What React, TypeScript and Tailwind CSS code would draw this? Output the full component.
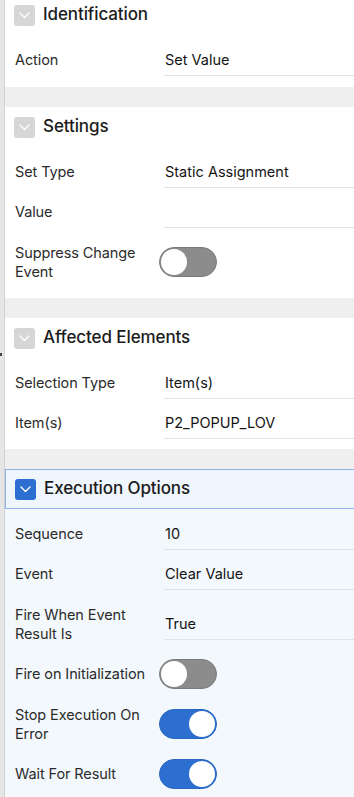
import React from "react";

type Row =
  | { kind: "text"; label: string; value: string; tall?: boolean }
  | { kind: "toggle"; label: string; on: boolean; tall?: boolean };

type Section = { title: string; active?: boolean; rows: Row[]; first?: boolean };

const sections: Section[] = [
  {
    title: "Identification",
    first: true,
    rows: [{ kind: "text", label: "Action", value: "Set Value" }],
  },
  {
    title: "Settings",
    rows: [
      { kind: "text", label: "Set Type", value: "Static Assignment" },
      { kind: "text", label: "Value", value: "" },
      { kind: "toggle", label: "Suppress Change Event", on: false, tall: true },
    ],
  },
  {
    title: "Affected Elements",
    rows: [
      { kind: "text", label: "Selection Type", value: "Item(s)" },
      { kind: "text", label: "Item(s)", value: "P2_POPUP_LOV" },
    ],
  },
  {
    title: "Execution Options",
    active: true,
    rows: [
      { kind: "text", label: "Sequence", value: "10" },
      { kind: "text", label: "Event", value: "Clear Value" },
      { kind: "text", label: "Fire When Event Result Is", value: "True", tall: true },
      { kind: "toggle", label: "Fire on Initialization", on: false },
      { kind: "toggle", label: "Stop Execution On Error", on: true, tall: true },
      { kind: "toggle", label: "Wait For Result", on: true },
    ],
  },
];

function Chevron({ active }: { active?: boolean }) {
  return (
    <span
      className={
        "flex h-[21px] w-[21px] shrink-0 items-center justify-center rounded-[3px] " +
        (active ? "bg-[#2c6fd0]" : "bg-[#d6d6d6]")
      }
    >
      <svg width="11" height="7" viewBox="0 0 11 7" fill="none">
        <path d="M1 1l4.5 4.5L10 1" stroke="white" strokeWidth="1.4" strokeLinecap="round" strokeLinejoin="round" />
      </svg>
    </span>
  );
}

function Toggle({ on }: { on: boolean }) {
  return (
    <span
      className={
        "flex h-[30px] w-[58px] items-center rounded-full border p-[1px] " +
        (on ? "justify-end border-[#2a66c4] bg-[#2c6fd0]" : "justify-start border-[#7a7a7a] bg-[#8c8c8c]")
      }
    >
      <span className="h-[26px] w-[26px] rounded-full bg-white" />
    </span>
  );
}

function FieldRow({ row }: { row: Row }) {
  return (
    <div className={"flex items-center " + (row.tall ? "h-[60px]" : "h-10")}>
      <div className="w-[159px] shrink-0 pl-[10px] pr-[6px] text-[14.5px] leading-[19.5px] tracking-[-0.1px] text-[#2b2b2b]">
        {row.label}
      </div>
      {row.kind === "text" ? (
        <div className="flex h-[31px] flex-1 items-center border-b border-[#e2e2e2] pl-px text-[14.5px] text-[#141414]">
          {row.value}
        </div>
      ) : (
        <div className="flex flex-1 items-center">
          <span className="-ml-[5px]">
            <Toggle on={row.on} />
          </span>
        </div>
      )}
    </div>
  );
}

function Panel({ s }: { s: Section }) {
  return (
    <div className={s.active ? "bg-[#f3f8fd]" : "bg-white"}>
      <div
        className={
          "flex items-center gap-[8px] pl-[9px] " +
          (s.first ? "h-[35px] pb-[5px]" : "h-10") +
          (s.active ? " border border-r-0 border-[#8db3e8] bg-[#f0f6fe]" : "")
        }
      >
        <Chevron active={s.active} />
        <span className="text-[17px] font-medium tracking-[-0.1px] text-[#1c1c1c]">{s.title}</span>
      </div>
      <div className={"pt-[5px] " + (s.active ? "pb-[4px]" : s.first ? "pb-[7px]" : "pb-[6px]")}>
        {s.rows.map((r) => (
          <FieldRow key={r.label} row={r} />
        ))}
      </div>
    </div>
  );
}

export default function App() {
  return (
    <div
      className="relative flex h-[797px] w-[354px] overflow-hidden bg-[#efefef]"
      style={{ fontFamily: "Inter, 'Liberation Sans', sans-serif" }}
    >
      <div className="w-[5px] shrink-0 border-r border-[#d2d2d2] bg-[#e6e6e6]" />
      <span className="absolute left-0 top-[353px] h-[3px] w-[2px] bg-[#444]" />
      <div className="flex flex-1 flex-col gap-[20px]">
        {sections.map((s) => (
          <Panel key={s.title} s={s} />
        ))}
      </div>
    </div>
  );
}
